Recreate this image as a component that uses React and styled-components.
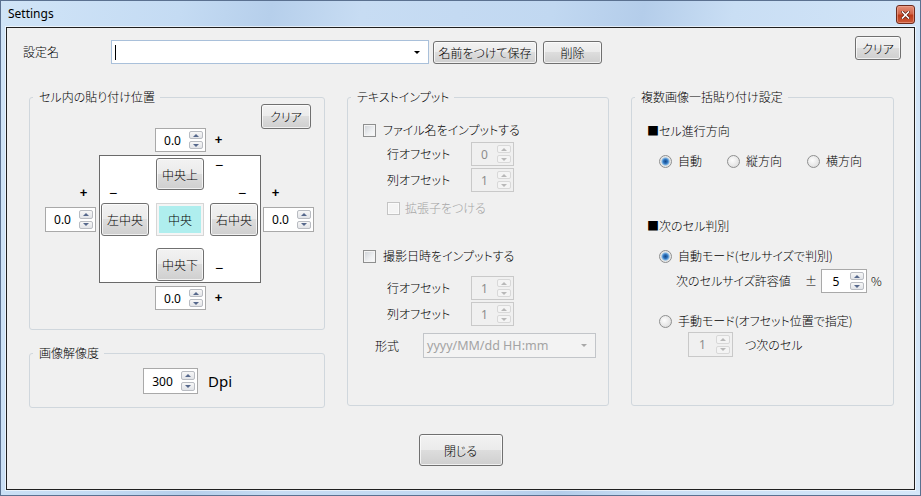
import styled, { createGlobalStyle } from 'styled-components'

const GlobalStyle = createGlobalStyle`
  html, body { margin: 0; padding: 0; }
  body {
    font-family: "Noto Sans CJK JP", "Noto Sans", sans-serif;
    font-size: 12px;
    font-weight: 300;
    color: #000;
    font-feature-settings: "palt" 1;
  }
  *, *::before, *::after { box-sizing: border-box; }
`

const Window = styled.div`
  width: 921px;
  height: 496px;
  display: flex;
  flex-direction: column;
  padding: 0 5px 5px;
  border: 1px solid #5b7190;
  background: linear-gradient(100deg, #d0e4f7 0%, #c4dbf3 18%, #b6cfeb 27%, #c7dcf3 36%, #c1d8f1 55%, #b4cdea 64%, #c9def4 73%, #d5e7f9 100%);
`

const TitleBar = styled.div`
  height: 26px;
  display: flex;
  justify-content: space-between;
  align-items: center;
  padding-left: 2px;
`

const TitleText = styled.span`
  font-family: "Noto Sans", sans-serif;
  font-weight: 400;
  font-size: 12px;
  line-height: 16px;
`

const CloseBtn = styled.div`
  align-self: flex-start;
  margin-top: 4px;
  width: 19px;
  height: 19px;
  display: flex;
  align-items: center;
  justify-content: center;
  border: 1px solid #6d2b1d;
  border-radius: 3px;
  background: linear-gradient(#e48f78 0%, #d2664a 45%, #bd3a18 55%, #cc5b3a 100%);
  box-shadow: inset 0 0 0 1px rgba(240, 170, 150, 0.6);
`

const Client = styled.div`
  flex: 1;
  display: flex;
  flex-direction: column;
  background: #f0f0f0;
  border: 1px solid #1f1f1f;
  box-shadow: 0 0 0 1px rgba(255, 255, 255, 0.6);
`

const TopRow = styled.div`
  display: flex;
  align-items: flex-start;
  padding: 8px 13px 0 16px;
`

const NameGroup = styled.div`
  display: flex;
  align-items: center;
  margin-top: 4px;
  flex: 1;
`

const Label = styled.span`
  display: inline-block;
  width: ${p => (p.$w ? `${p.$w}px` : 'auto')};
  margin-left: ${p => p.$ml || 0}px;
  color: ${p => (p.$disabled ? '#a3a3a3' : '#000')};
  line-height: 16px;
  white-space: nowrap;
  flex-shrink: 0;
`

const Combo = styled.div`
  width: ${p => p.$w}px;
  height: ${p => p.$h}px;
  display: flex;
  align-items: center;
  justify-content: space-between;
  padding: 0 8px 0 3px;
  border: 1px solid ${p => (p.$disabled ? '#c2c5c9' : '#a9c0da')};
  background: ${p => (p.$disabled ? '#f3f3f3' : '#fff')};
  flex-shrink: 0;
`

const Caret = styled.span`
  width: 1px;
  height: 15px;
  background: #000;
`

const ComboText = styled.span`
  font-family: "Noto Sans", sans-serif;
  font-weight: 400;
  font-size: 12.5px;
  color: #a3a3a3;
`

const Arrow = styled.span`
  width: 0;
  height: 0;
  border-left: ${p => p.$size || 4}px solid transparent;
  border-right: ${p => p.$size || 4}px solid transparent;
  border-top: ${p => p.$size || 4}px solid ${p => p.$color || '#000'};
`

const Button = styled.button`
  width: ${p => p.$w}px;
  height: ${p => p.$h}px;
  margin-left: ${p => p.$ml || 0}px;
  padding: 0;
  font: inherit;
  color: #000;
  border: 1px solid #707070;
  border-radius: 3px;
  background: linear-gradient(#f2f2f2 0%, #ebebeb 49%, #dddddd 50%, #cfcfcf 100%);
  box-shadow: inset 0 0 0 1px rgba(255, 255, 255, 0.7);
  flex-shrink: 0;
`

const ActiveButton = styled(Button)`
  border: 1px solid #d6d6d6;
  border-radius: 0;
  background: #afeeee;
  box-shadow: inset 0 0 0 2px #f5f5f5;
`

const Main = styled.div`
  display: grid;
  grid-template-columns: 296px 262px 263px;
  column-gap: 22px;
  align-items: start;
  margin-top: 26px;
  padding-left: 22px;
`

const Column = styled.div`
  display: flex;
  flex-direction: column;
  gap: 16px;
`

const Group = styled.fieldset`
  margin: 0;
  padding: 0;
  min-width: 0;
  height: ${p => p.$h}px;
  border: 1px solid #d0d7dd;
  border-radius: 3px;
`

const Legend = styled.legend`
  margin-left: 3px;
  padding: 0 5px 0 6px;
  line-height: 14px;
  font-size: 12px;
`

const Cross = styled.div`
  display: grid;
  grid-template-columns: 52px 162px 51px;
  grid-template-rows: 48px 128px 24px;
  column-gap: 2px;
  row-gap: 3px;
  padding-left: 15px;
`

const ClearCell = styled.div`
  grid-column: 3;
  grid-row: 1;
  margin-left: -2px;
`

const SpinWithPlus = styled.div`
  grid-column: 2;
  grid-row: ${p => p.$row};
  align-self: end;
  display: flex;
  align-items: center;
  gap: 8px;
  padding-left: 56px;
`

const SideCol = styled.div`
  grid-column: ${p => p.$col};
  grid-row: 2;
  display: flex;
  flex-direction: column;
  align-items: flex-start;
  gap: 7px;
  padding-top: 31px;
`

const Plus = styled.span`
  display: block;
  width: 9px;
  margin-left: ${p => p.$x || 0}px;
  font-family: "Liberation Sans", sans-serif;
  font-weight: bold;
  font-size: 13px;
  line-height: 14px;
  text-align: center;
`

const Minus = styled.span`
  display: block;
  margin-left: ${p => p.$x || 0}px;
  margin-top: ${p => p.$t || 0}px;
  margin-bottom: ${p => p.$b || 0}px;
  font-family: "Liberation Sans", sans-serif;
  font-size: 14px;
  line-height: 10px;
`

const PosBox = styled.div`
  grid-column: 2;
  grid-row: 2;
  display: grid;
  grid-template-columns: 49px 48px 48px;
  grid-template-rows: 38px 38px 33px;
  column-gap: 6px;
  row-gap: 7px;
  padding: 2px 2px 1px 1px;
  border: 1px solid #6a6a6a;
  background: #fff;
`

const MarkCell = styled.div`
  display: flex;
  flex-direction: column;
  justify-content: ${p => p.$justify || 'flex-start'};
`

const SpinBox = styled.div`
  display: flex;
  width: ${p => p.$w}px;
  height: ${p => p.$h || 24}px;
  border: 1px solid ${p => (p.$disabled ? '#c9c9c9' : '#a9a9a9')};
  background: ${p => (p.$disabled ? '#f0f0f0' : '#fff')};
  flex-shrink: 0;
`

const SpinValue = styled.div`
  flex: 1;
  display: flex;
  align-items: center;
  justify-content: center;
  font-family: "Noto Sans", sans-serif;
  font-weight: 400;
  font-size: 12px;
  color: ${p => (p.$disabled ? '#8d8d8d' : '#000')};
`

const SpinButtons = styled.div`
  width: 16px;
  display: flex;
  flex-direction: column;
  gap: 2px;
  padding: 2px 2px 2px 0;
`

const SpinBtn = styled.div`
  flex: 1;
  display: flex;
  align-items: center;
  justify-content: center;
  border: 1px solid ${p => (p.$disabled ? '#d8d8d8' : '#b9bcc2')};
  border-radius: 2px;
  background: ${p => (p.$disabled ? '#f4f4f4' : 'linear-gradient(#f7f7f7, #e2e4e8)')};
`

const Tri = styled.span`
  width: 0;
  height: 0;
  border-left: 3px solid transparent;
  border-right: 3px solid transparent;
  ${p => (p.$down ? 'border-top' : 'border-bottom')}: 3px solid ${p => (p.$disabled ? '#b8b8b8' : '#56688c')};
`

const Spinner = ({ value, w, h, disabled }) => (
  <SpinBox $w={w} $h={h} $disabled={disabled}>
    <SpinValue $disabled={disabled}>{value}</SpinValue>
    <SpinButtons>
      <SpinBtn $disabled={disabled}><Tri $disabled={disabled} /></SpinBtn>
      <SpinBtn $disabled={disabled}><Tri $down $disabled={disabled} /></SpinBtn>
    </SpinButtons>
  </SpinBox>
)

const ResRow = styled.div`
  display: flex;
  align-items: center;
  padding: 8px 0 0 113px;
`

const Unit = styled.span`
  margin-left: 10px;
  font-family: "Noto Sans", sans-serif;
  font-weight: 400;
  font-size: 15px;
`

const Content = styled.div`
  display: flex;
  flex-direction: column;
  padding-left: 15px;
`

const Row = styled.div`
  display: flex;
  align-items: center;
  gap: ${p => p.$gap || 0}px;
  height: ${p => (p.$h ? `${p.$h}px` : 'auto')};
  margin-top: ${p => p.$mt || 0}px;
  padding-left: ${p => p.$pl || 0}px;
`

const CheckBox = styled.span`
  width: 13px;
  height: 13px;
  flex-shrink: 0;
  border: 1px solid ${p => (p.$disabled ? '#c4c4c4' : '#8e8f8f')};
  background: ${p => (p.$disabled ? '#f4f4f4' : 'linear-gradient(135deg, #cdd1d6 0%, #eef0f2 60%, #fafafa 100%)')};
  box-shadow: inset 0 0 0 1px ${p => (p.$disabled ? '#fafafa' : '#f4f4f4')};
`

const Radio = styled.span`
  width: 13px;
  height: 13px;
  flex-shrink: 0;
  border-radius: 50%;
  border: 1px solid #8e8f8f;
  background: ${p => (p.$checked
    ? 'radial-gradient(circle, #174a86 0, #2c70bb 2px, #7cb4e3 3.5px, #e4e4e4 4.5px, #f7f7f7 100%)'
    : 'radial-gradient(circle at 40% 40%, #fdfdfd 0, #e6e6e6 60%, #d2d2d2 100%)')};
`

const Option = styled.span`
  display: flex;
  align-items: center;
  gap: 6px;
  line-height: 16px;
`

const Footer = styled.div`
  display: flex;
  justify-content: center;
  margin-top: 26px;
`

const CloseIcon = () => (
  <svg width="9" height="8" viewBox="0 0 9 8">
    <path d="M1.5 1 L7.5 7 M7.5 1 L1.5 7" stroke="#5a1c10" strokeWidth="3" strokeLinecap="square" />
    <path d="M1.5 1 L7.5 7 M7.5 1 L1.5 7" stroke="#fff" strokeWidth="1.6" strokeLinecap="square" />
  </svg>
)

const App = () => (
  <>
    <GlobalStyle />
    <Window>
      <TitleBar>
        <TitleText>Settings</TitleText>
        <CloseBtn><CloseIcon /></CloseBtn>
      </TitleBar>
      <Client>
        <TopRow>
          <NameGroup>
            <Label $w={88}>設定名</Label>
            <Combo $w={318} $h={24}>
              <Caret />
              <Arrow $size={3.5} />
            </Combo>
            <Button $w={104} $h={23} $ml={4}>名前をつけて保存</Button>
            <Button $w={59} $h={23} $ml={6}>削除</Button>
          </NameGroup>
          <Button $w={46} $h={24}>クリア</Button>
        </TopRow>

        <Main>
          <Column>
            <Group $h={240}>
              <Legend>セル内の貼り付け位置</Legend>
              <Cross>
                <ClearCell><Button $w={50} $h={25}>クリア</Button></ClearCell>
                <SpinWithPlus $row={1}>
                  <Spinner value="0.0" w={51} />
                  <Plus>+</Plus>
                </SpinWithPlus>
                <SideCol $col={1}>
                  <Plus $x={34}>+</Plus>
                  <Spinner value="0.0" w={51} h={25} />
                </SideCol>
                <PosBox>
                  <MarkCell $justify="flex-end">
                    <Minus $x={8} $b={-2}>−</Minus>
                  </MarkCell>
                  <div><Button $w={48} $h={32}>中央上</Button></div>
                  <MarkCell $justify="space-between">
                    <Minus $x={5} $t={2}>−</Minus>
                    <Minus $x={28} $b={-2}>−</Minus>
                  </MarkCell>
                  <div><Button $w={48} $h={33}>左中央</Button></div>
                  <div><ActiveButton $w={48} $h={33}>中央</ActiveButton></div>
                  <div><Button $w={48} $h={33}>右中央</Button></div>
                  <div />
                  <div><Button $w={48} $h={33}>中央下</Button></div>
                  <MarkCell>
                    <Minus $x={5} $t={15}>−</Minus>
                  </MarkCell>
                </PosBox>
                <SideCol $col={3}>
                  <Plus $x={8}>+</Plus>
                  <Spinner value="0.0" w={51} h={25} />
                </SideCol>
                <SpinWithPlus $row={3}>
                  <Spinner value="0.0" w={51} />
                  <Plus>+</Plus>
                </SpinWithPlus>
              </Cross>
            </Group>

            <Group $h={62}>
              <Legend>画像解像度</Legend>
              <ResRow>
                <Spinner value="300" w={55} h={26} />
                <Unit>Dpi</Unit>
              </ResRow>
            </Group>
          </Column>

          <Group $h={316}>
            <Legend>テキストインプット</Legend>
            <Content>
              <Row $mt={18} $gap={7} $h={16}>
                <CheckBox />
                <Label>ファイル名をインプットする</Label>
              </Row>
              <Row $mt={4} $pl={24}>
                <Label $w={84}>行オフセット</Label>
                <Spinner value="0" w={43} disabled />
              </Row>
              <Row $mt={2} $pl={24}>
                <Label $w={84}>列オフセット</Label>
                <Spinner value="1" w={43} disabled />
              </Row>
              <Row $mt={8} $pl={24} $gap={5} $h={16}>
                <CheckBox $disabled />
                <Label $disabled>拡張子をつける</Label>
              </Row>
              <Row $mt={32} $gap={7} $h={16}>
                <CheckBox />
                <Label>撮影日時をインプットする</Label>
              </Row>
              <Row $mt={12} $pl={24}>
                <Label $w={84}>行オフセット</Label>
                <Spinner value="1" w={43} disabled />
              </Row>
              <Row $mt={2} $pl={24}>
                <Label $w={84}>列オフセット</Label>
                <Spinner value="1" w={43} disabled />
              </Row>
              <Row $mt={7} $pl={12}>
                <Label $w={48}>形式</Label>
                <Combo $w={173} $h={25} $disabled>
                  <ComboText>yyyy/MM/dd HH:mm</ComboText>
                  <Arrow $size={3} $color="#a8a8a8" />
                </Combo>
              </Row>
            </Content>
          </Group>

          <Group $h={316}>
            <Legend>複数画像一括貼り付け設定</Legend>
            <Content>
              <Row $mt={19} $h={16}>
                <Label>■セル進行方向</Label>
              </Row>
              <Row $mt={14} $pl={12} $gap={25} $h={16}>
                <Option><Radio $checked />自動</Option>
                <Option><Radio />縦方向</Option>
                <Option><Radio />横方向</Option>
              </Row>
              <Row $mt={49} $h={16}>
                <Label>■次のセル判別</Label>
              </Row>
              <Row $mt={14} $pl={12} $h={16}>
                <Option><Radio $checked />自動モード(セルサイズで判別)</Option>
              </Row>
              <Row $mt={5} $pl={29}>
                <Label $w={129}>次のセルサイズ許容値</Label>
                <Label $w={16}>±</Label>
                <Spinner value="5" w={46} />
                <Label $ml={4}>%</Label>
              </Row>
              <Row $mt={20} $pl={12} $h={16}>
                <Option><Radio />手動モード(オフセット位置で指定)</Option>
              </Row>
              <Row $mt={3} $pl={41}>
                <Spinner value="1" w={45} h={25} disabled />
                <Label $ml={12}>つ次のセル</Label>
              </Row>
            </Content>
          </Group>
        </Main>

        <Footer>
          <Button $w={84} $h={32}>閉じる</Button>
        </Footer>
      </Client>
    </Window>
  </>
)

export default App
